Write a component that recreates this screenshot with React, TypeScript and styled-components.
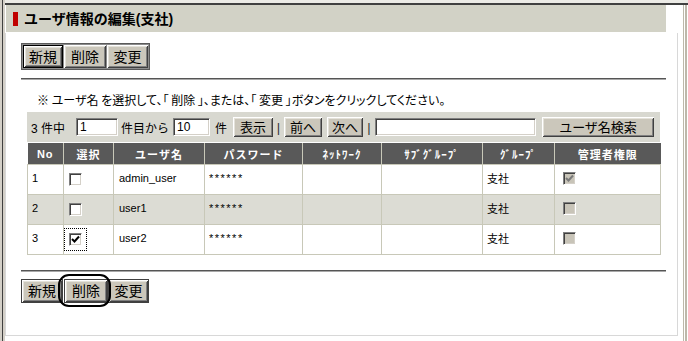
import * as React from "react";
import styled, { createGlobalStyle } from "styled-components";

const GlobalStyle = createGlobalStyle`
  html, body {
    margin: 0;
    padding: 0;
    background: #fff;
  }
  body {
    font-family: "Liberation Sans", "Noto Sans CJK JP", sans-serif;
    color: #000;
  }
`;

const FONT = `"Liberation Sans", "Noto Sans CJK JP", sans-serif`;

const Frame = styled.div`
  width: 688px;
  height: 341px;
  box-sizing: border-box;
  overflow: hidden;
  padding: 5px 10px 0 5px;
  background: #fff;
  box-shadow: inset 2px 0 0 #d4d0c8, inset 3px 0 0 #404040,
    inset 5px 0 0 #d4d0c8, inset 0 3px 0 #ecebe6, inset 0 5px 0 #404040,
    inset -1px 0 0 #fff, inset -3px 0 0 #bdb8aa, inset -4px 0 0 #fff,
    inset -5px 0 0 #bdb8aa;
`;

const Panel = styled.div`
  width: 673px;
`;

const TitleBar = styled.div`
  margin: 0 0 1px 1px;
  width: 660px;
  height: 27px;
  box-sizing: border-box;
  padding-left: 7px;
  display: flex;
  align-items: center;
  gap: 6px;
  background: #d2d2c6;
`;

const RedMark = styled.span`
  width: 5px;
  height: 14px;
  background: #c00000;
`;

const Title = styled.h1`
  margin: 0;
  font-family: ${FONT};
  font-size: 14px;
  font-weight: bold;
  line-height: 16px;
`;

const Body = styled.div`
  height: 303px;
  box-sizing: border-box;
  border: 1px solid #d8d8d8;
  border-top: none;
  padding: 10px 11px 0 15px;
`;

const Row = styled.div<{ $mt?: number }>`
  display: flex;
  position: relative;
  margin-top: ${(p) => p.$mt ?? 0}px;
`;

const BtnGroup = styled.div`
  display: flex;
  gap: 1px;
  padding: 1px;
  border: 1px solid #5a5a5a;
  background: #8c8c8c;
`;

const Btn = styled.button<{ $w: number; $h: number; $fs?: number; $def?: boolean; $boxed?: boolean; $ml?: number }>`
  width: ${(p) => p.$w}px;
  height: ${(p) => p.$h}px;
  box-sizing: border-box;
  padding: 0;
  margin: 0 0 0 ${(p) => p.$ml ?? 0}px;
  font-family: ${FONT};
  font-size: ${(p) => p.$fs ?? 14}px;
  line-height: 1;
  color: #000;
  background: #cbc7bb;
  border: ${(p) => (p.$def ? "1px solid #000" : p.$boxed ? "1px solid #404040" : "none")};
  box-shadow: inset 1px 1px 0 #fff, inset -1px -1px 0 #404040,
    inset 2px 2px 0 #e4e2da, inset -2px -2px 0 #808080;
  cursor: pointer;
`;

const Rule = styled.div<{ $mt: number }>`
  margin-top: ${(p) => p.$mt}px;
  width: 645px;
  border-top: 1px solid #555;
  border-bottom: 1px solid #a8a8a8;
`;

const Note = styled.p`
  margin: 12px 0 0 16px;
  font-family: "Noto Sans CJK JP", sans-serif;
  font-feature-settings: "palt";
  font-size: 12px;
  line-height: 16px;
`;

const ListArea = styled.div`
  margin: 4px 0 0 6px;
  width: 633px;
`;

const Toolbar = styled.div`
  height: 30px;
  box-sizing: border-box;
  padding-left: 4px;
  display: flex;
  align-items: center;
  background: #d8d8d0;
  font-size: 12px;
`;

const Label = styled.span<{ $w: number; $pl?: number }>`
  width: ${(p) => p.$w}px;
  padding-left: ${(p) => p.$pl ?? 0}px;
  box-sizing: border-box;
  white-space: nowrap;
  font-family: ${FONT};
  font-size: 12px;
`;

const Sep = styled.span<{ $w: number }>`
  width: ${(p) => p.$w}px;
  text-align: center;
  font-size: 13px;
  color: #333;
`;

const Field = styled.input<{ $w: number }>`
  width: ${(p) => p.$w}px;
  height: 18px;
  margin: 0;
  box-sizing: border-box;
  padding: 0 3px;
  font-family: ${FONT};
  font-size: 12px;
  background: #fff;
  border-style: solid;
  border-width: 1px;
  border-color: #808080 #fff #fff #808080;
  box-shadow: inset 1px 1px 0 #404040, inset -1px -1px 0 #d4d0c8;
  outline: none;
`;

const Table = styled.table`
  margin-top: 1px;
  width: 633px;
  border-collapse: collapse;
  table-layout: fixed;
  font-family: ${FONT};
`;

const Th = styled.th`
  height: 21px;
  padding: 0;
  background: #595959;
  color: #fff;
  font-size: 11px;
  font-weight: bold;
  letter-spacing: 1px;
  text-align: center;
  white-space: nowrap;
  overflow: hidden;
  border-left: 1px solid #c8c8b8;
  border-bottom: 1px solid #c8c8b8;
  &:first-child {
    border-left: none;
  }
`;

const Tr = styled.tr<{ $alt?: boolean }>`
  background: ${(p) => (p.$alt ? "#dcdcd4" : "#fff")};
`;

const Td = styled.td<{ $pl?: number }>`
  height: 26px;
  padding: 0 0 3px ${(p) => p.$pl ?? 4}px;
  font-size: 11px;
  vertical-align: middle;
  white-space: nowrap;
  border: 1px solid #c8c8b8;
`;

const Mask = styled.span`
  font-size: 11px;
  letter-spacing: 1.5px;
`;

const Focus = styled.span<{ $on?: boolean }>`
  display: inline-flex;
  margin-top: 3px;
  padding: 4px;
  border: 1px dotted ${(p) => (p.$on ? "#000" : "transparent")};
`;

const Check = styled.span<{ $off?: boolean }>`
  display: inline-flex;
  align-items: center;
  justify-content: center;
  width: 13px;
  height: 13px;
  box-sizing: border-box;
  background: ${(p) => (p.$off ? "#c8c4b8" : "#fff")};
  border-style: solid;
  border-width: 1px;
  border-color: #808080 #fff #fff #808080;
  box-shadow: inset 1px 1px 0 #404040, inset -1px -1px 0 #d4d0c8;
  vertical-align: middle;
`;

const Oval = styled.div`
  position: absolute;
  left: 37px;
  top: -5px;
  width: 53px;
  height: 33px;
  box-sizing: border-box;
  border: 2px solid #000;
  border-radius: 11px;
  pointer-events: none;
`;

const CheckBox: React.FC<{ checked?: boolean; disabled?: boolean }> = ({ checked, disabled }) => (
  <Check $off={disabled}>
    {checked && (
      <svg width="9" height="9" viewBox="0 0 9 9">
        <path d="M1 4 L3.5 6.5 L8 1.5" fill="none" stroke={disabled ? "#7a7a7a" : "#000"} strokeWidth="2" />
      </svg>
    )}
  </Check>
);

const cols: [string, number][] = [
  ["No", 36],
  ["選択", 50],
  ["ユーザ名", 91],
  ["パスワード", 98],
  ["ﾈｯﾄﾜｰｸ", 79],
  ["ｻﾌﾞｸﾞﾙｰﾌﾟ", 101],
  ["ｸﾞﾙｰﾌﾟ", 72],
  ["管理者権限", 106],
];

const users = [
  { no: 1, name: "admin_user", sel: false, admin: true },
  { no: 2, name: "user1", sel: false, admin: false },
  { no: 3, name: "user2", sel: true, admin: false },
];

export default function App() {
  return (
    <>
      <GlobalStyle />
      <Frame>
        <Panel>
          <TitleBar>
            <RedMark />
            <Title>ユーザ情報の編集(支社)</Title>
          </TitleBar>
          <Body>
            <Row>
              <BtnGroup>
                <Btn $w={40} $h={23} $def>新規</Btn>
                <Btn $w={42} $h={23}>削除</Btn>
                <Btn $w={41} $h={23}>変更</Btn>
              </BtnGroup>
            </Row>
            <Rule $mt={8} />
            <Note>※ ユーザ名 を選択して、「 削除 」、または、「 変更 」ボタンをクリックしてください。</Note>
            <ListArea>
              <Toolbar>
                <Label $w={45}>3 件中</Label>
                <Field $w={42} defaultValue="1" />
                <Label $w={55} $pl={3}>件目から</Label>
                <Field $w={37} defaultValue="10" />
                <Label $w={23} $pl={5}>件</Label>
                <Btn $w={40} $h={20} $fs={13}>表示</Btn>
                <Sep $w={11}>|</Sep>
                <Btn $w={38} $h={20} $fs={13}>前へ</Btn>
                <Btn $w={36} $h={20} $fs={13} $ml={5}>次へ</Btn>
                <Sep $w={12}>|</Sep>
                <Field $w={161} />
                <Btn $w={112} $h={20} $fs={13} $ml={6}>ユーザ名検索</Btn>
              </Toolbar>
              <Table>
                <colgroup>
                  {cols.map(([label, w]) => (
                    <col key={label} width={w} />
                  ))}
                </colgroup>
                <thead>
                  <tr>
                    {cols.map(([label]) => (
                      <Th key={label}>{label}</Th>
                    ))}
                  </tr>
                </thead>
                <tbody>
                  {users.map((u, i) => (
                    <Tr key={u.no} $alt={i % 2 === 1}>
                      <Td>{u.no}</Td>
                      <Td $pl={0}>
                        <Focus $on={u.sel}>
                          <CheckBox checked={u.sel} />
                        </Focus>
                      </Td>
                      <Td $pl={5}>{u.name}</Td>
                      <Td><Mask>******</Mask></Td>
                      <Td />
                      <Td />
                      <Td>支社</Td>
                      <Td $pl={8}>
                        <CheckBox checked={u.admin} disabled />
                      </Td>
                    </Tr>
                  ))}
                </tbody>
              </Table>
            </ListArea>
            <Rule $mt={15} />
            <Row $mt={7}>
              <Btn $w={42} $h={24} $boxed>新規</Btn>
              <Btn $w={44} $h={24} $boxed $ml={1}>削除</Btn>
              <Btn $w={41} $h={24} $boxed>変更</Btn>
              <Oval />
            </Row>
          </Body>
        </Panel>
      </Frame>
    </>
  );
}
